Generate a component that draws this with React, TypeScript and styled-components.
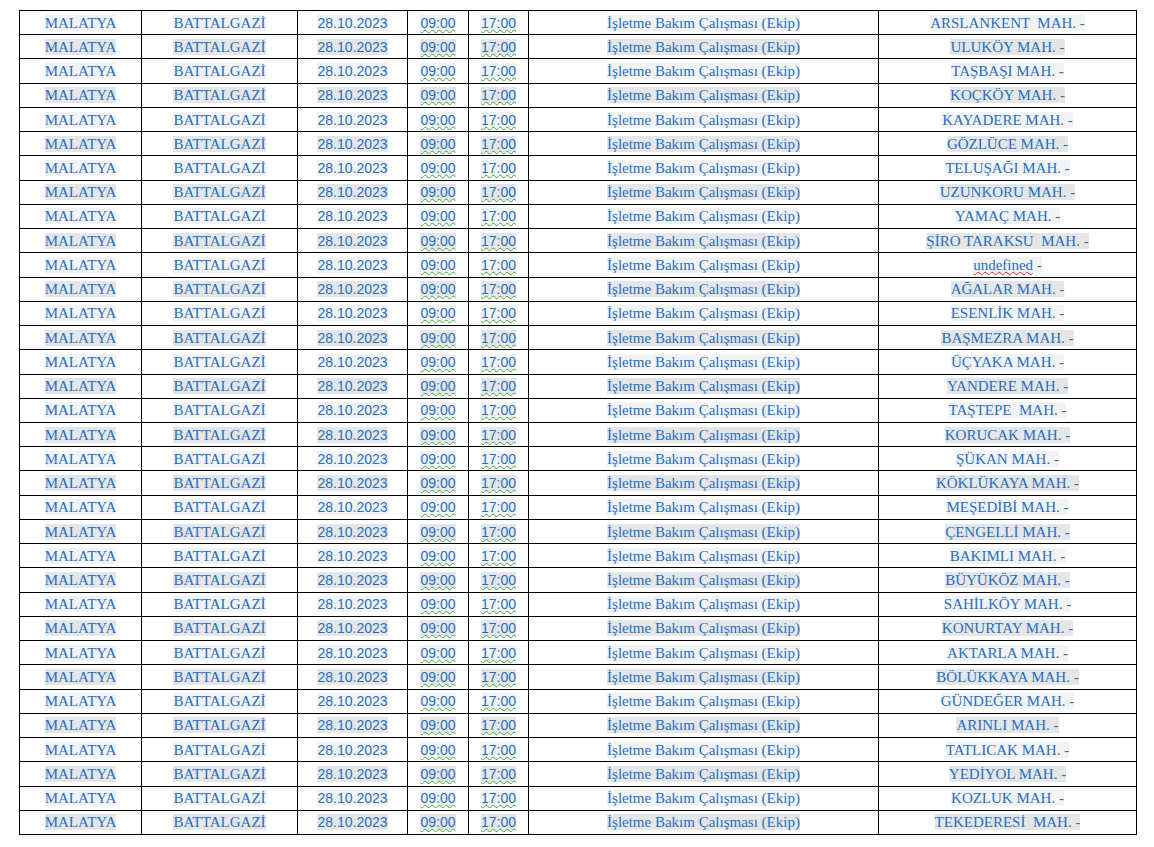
import React from "react";
import styled, { createGlobalStyle } from "styled-components";

const GlobalStyle = createGlobalStyle`
  html, body { margin: 0; padding: 0; background: #ffffff; }
  body { font-family: "Liberation Serif", "Times New Roman", serif; }
`;

const Page = styled.div`
  padding: 10px 0 0 19px;
`;

const Table = styled.table`
  border-collapse: collapse;
  table-layout: fixed;
  width: 1118px;
`;

const Row = styled.tr`
  height: 24.235px;
`;

const Cell = styled.td<{ $sans?: boolean }>`
  border: 1px solid #000;
  padding: 0;
  text-align: center;
  vertical-align: middle;
  color: #1f6fc5;
  font-family: ${(p) =>
    p.$sans ? `"Liberation Sans", Arial, sans-serif` : `"Liberation Serif", "Times New Roman", serif`};
  font-size: ${(p) => (p.$sans ? "14px" : "15px")};
  line-height: 16px;
  white-space: pre;
`;

const Mark = styled.span<{ $dark: boolean; $check?: "green" | "red" }>`
  background: ${(p) => (p.$dark ? "#e6e6e6" : "#f3f3f3")};
  ${(p) =>
    p.$check
      ? `text-decoration: underline wavy ${p.$check === "green" ? "#3aa63a" : "#e02020"};
         text-decoration-thickness: 1px;
         text-underline-offset: 1px;`
      : ""}
`;

const places = [
  "ARSLANKENT  MAH. -",
  "ULUKÖY MAH. -",
  "TAŞBAŞI MAH. -",
  "KOÇKÖY MAH. -",
  "KAYADERE MAH. -",
  "GÖZLÜCE MAH. -",
  "TELUŞAĞI MAH. -",
  "UZUNKORU MAH. -",
  "YAMAÇ MAH. -",
  "ŞİRO TARAKSU  MAH. -",
  "undefined -",
  "AĞALAR MAH. -",
  "ESENLİK MAH. -",
  "BAŞMEZRA MAH. -",
  "ÜÇYAKA MAH. -",
  "YANDERE MAH. -",
  "TAŞTEPE  MAH. -",
  "KORUCAK MAH. -",
  "ŞÜKAN MAH. -",
  "KÖKLÜKAYA MAH. -",
  "MEŞEDİBİ MAH. -",
  "ÇENGELLİ MAH. -",
  "BAKIMLI MAH. -",
  "BÜYÜKÖZ MAH. -",
  "SAHİLKÖY MAH. -",
  "KONURTAY MAH. -",
  "AKTARLA MAH. -",
  "BÖLÜKKAYA MAH. -",
  "GÜNDEĞER MAH. -",
  "ARINLI MAH. -",
  "TATLICAK MAH. -",
  "YEDİYOL MAH. -",
  "KOZLUK MAH. -",
  "TEKEDERESİ  MAH. -",
];

const widths = [122, 156, 110, 61, 60, 350, 258];

export default function App() {
  return (
    <>
      <GlobalStyle />
      <Page>
        <Table>
          <colgroup>
            {widths.map((w, i) => (
              <col key={i} style={{ width: w }} />
            ))}
          </colgroup>
          <tbody>
            {places.map((p, i) => {
              const dark = i % 2 === 1;
              const isUndef = p.startsWith("undefined");
              return (
                <Row key={i}>
                  <Cell><Mark $dark={dark}>MALATYA</Mark></Cell>
                  <Cell><Mark $dark={dark}>BATTALGAZİ</Mark></Cell>
                  <Cell $sans><Mark $dark={dark}>28.10.2023</Mark></Cell>
                  <Cell $sans><Mark $dark={dark} $check="green">09:00</Mark></Cell>
                  <Cell $sans><Mark $dark={dark} $check="green">17:00</Mark></Cell>
                  <Cell><Mark $dark={dark}>İşletme Bakım Çalışması (Ekip)</Mark></Cell>
                  <Cell>
                    {isUndef ? (
                      <>
                        <Mark $dark={false} $check="red">undefined</Mark>
                        <Mark $dark={false}> -</Mark>
                      </>
                    ) : (
                      <Mark $dark={dark}>{p}</Mark>
                    )}
                  </Cell>
                </Row>
              );
            })}
          </tbody>
        </Table>
      </Page>
    </>
  );
}
